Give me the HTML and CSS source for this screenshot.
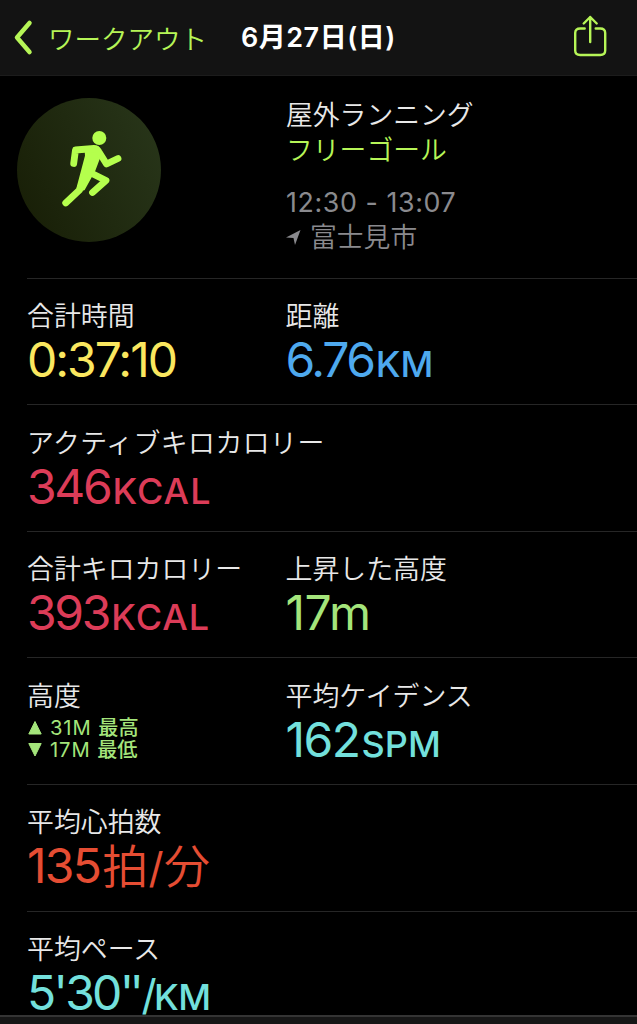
FILE: index.html
```
<!DOCTYPE html>
<html lang="ja">
<head>
    <meta charset="UTF-8">
    <meta name="viewport" content="width=device-width, initial-scale=1.0">
    <title>ワークアウト</title>
    <link rel="stylesheet" href="styles.css">
</head>
<body>
    <div class="container">
        <div class="header">
            <a class="back" href="#">
                <svg width="22" height="36" viewBox="0 0 22 36"><path d="M17.500 3L5 17.500L17.500 32"/></svg>
                <span>ワークアウト</span>
            </a>
            <h1 class="title">6月27日(日)</h1>
            <a class="share" href="#">
                <svg width="36" height="44" viewBox="0 0 36 44"><path d="M9.500 12.500H5Q0 12.500 0 17V34.500Q0 39 5 39H25Q30 39 30 34.500V17Q30 12.500 25 12.500H20.500M15 26V1M8.500 7.500L15 1L21.500 7.500" transform="translate(0.200 0)"/></svg>
            </a>
        </div>
        <div class="content">
            <div class="summary">
                <div class="badge">
                    <svg width="144" height="144" viewBox="0 0 144 144">
                        <circle cx="82.300" cy="40" r="7"/>
                        <path class="torso" d="M69 50L81 50L83 56L77 72L66.500 91L61 90L69.500 58Z"/>
                        <path d="M56.700 65.500L58.500 52L77 50.500Q80 50.500 82 54L89.500 66L101 60.500M72 74L89 82.500L75.500 94.500M67 80L62.500 92L48.700 105"/>
                    </svg>
                </div>
                <div class="info">
                    <div class="kind">屋外ランニング</div>
                    <div class="goal">フリーゴール</div>
                    <div class="time">12:30 - 13:07</div>
                    <div class="place">
                        <svg width="15" height="15" viewBox="0 0 15 15"><path d="M0 7.500L14.500 0L9 15L7.500 8Z"/></svg>
                        <span>富士見市</span>
                    </div>
                </div>
            </div>
            <div class="row">
                <div class="item">
                    <div class="label">合計時間</div>
                    <div class="value yellow duration">0:37:10</div>
                </div>
                <div class="item">
                    <div class="label">距離</div>
                    <div class="value blue">6.76<span class="unit">KM</span></div>
                </div>
            </div>
            <div class="row">
                <div class="item">
                    <div class="label wide">アクティブキロカロリー</div>
                    <div class="value red">346<span class="unit kcal">KCAL</span></div>
                </div>
            </div>
            <div class="row">
                <div class="item">
                    <div class="label">合計キロカロリー</div>
                    <div class="value red">393<span class="unit kcal">KCAL</span></div>
                </div>
                <div class="item">
                    <div class="label">上昇した高度</div>
                    <div class="value green climb">17m</div>
                </div>
            </div>
            <div class="row">
                <div class="item">
                    <div class="label">高度</div>
                    <div class="ranges">
                        <div class="range">
                            <svg width="16" height="16" viewBox="0 0 16 16"><path d="M8 1.500L14.200 14H1.800Z"/></svg>
                            <span>31M <b>最高</b></span>
                        </div>
                        <div class="range">
                            <svg width="16" height="16" viewBox="0 0 16 16"><path d="M8 14L14.200 1.500H1.800Z"/></svg>
                            <span>17M <b>最低</b></span>
                        </div>
                    </div>
                </div>
                <div class="item">
                    <div class="label">平均ケイデンス</div>
                    <div class="value cyan cadence">162<span class="unit">SPM</span></div>
                </div>
            </div>
            <div class="row">
                <div class="item">
                    <div class="label">平均心拍数</div>
                    <div class="value orange rate">135<span class="kanji">拍</span><span class="slash">/</span><span class="kanji">分</span></div>
                </div>
            </div>
            <div class="row">
                <div class="item">
                    <div class="label">平均ペース</div>
                    <div class="value cyan pace">5'30<span class="seconds">''</span><span class="slash">/</span><span class="unit">KM</span></div>
                </div>
            </div>
        </div>
        <div class="tabbar"></div>
    </div>
</body>
</html>
```
FILE: styles.css
```
* {
    padding: 0;
    margin: 0;
    box-sizing: border-box;
}

body {
    background: #000;
    color: #e8e8e8;
    font-family: Inter, "Noto Sans CJK JP", sans-serif;
}

a {
    color: #b6f557;
    text-decoration: none;
}

svg {
    display: block;
    flex: none;
}

.container {
    display: flex;
    flex-direction: column;
    height: 1024px;
    overflow: hidden;
}

.header {
    display: flex;
    align-items: center;
    flex: none;
    height: 76px;
    padding: 0 26px 0 12px;
    background: #131313;
    border-bottom: 1px solid #1c1c1c;
}

.header svg {
    overflow: visible;
    fill: none;
    stroke: #b6f557;
    stroke-linecap: round;
    stroke-linejoin: round;
}

.back {
    display: flex;
    align-items: center;
    gap: 14px;
    width: 229px;
    font-size: 26.5px;
    font-weight: 350;
    white-space: nowrap;
}

.back svg {
    stroke-width: 4.5;
}

.title {
    padding-top: 1px;
    color: #fff;
    font-size: 27px;
    font-weight: 600;
    line-height: 38px;
    letter-spacing: 0.5px;
    white-space: nowrap;
}

.share {
    margin-left: auto;
}

.share svg {
    stroke-width: 2.4;
}

.content {
    flex: 1;
    overflow: hidden;
}

.summary {
    display: grid;
    grid-template-columns: 269px 1fr;
    height: 201.6px;
    padding: 21.5px 0 0 17px;
}

.badge {
    width: 144px;
    height: 144px;
    border-radius: 50%;
    background: linear-gradient(65deg, #171d05, #29371b);
}

.badge svg {
    fill: none;
    stroke: #b5ff4d;
    stroke-width: 6.8;
    stroke-linecap: round;
    stroke-linejoin: round;
}

.badge circle {
    fill: #b5ff4d;
    stroke: none;
}

.badge .torso {
    fill: #b5ff4d;
    stroke-width: 3;
}

.info {
    font-size: 26.8px;
    font-weight: 350;
    line-height: 35px;
}

.goal {
    color: #b6f557;
}

.time,
.place {
    color: #8a8a8e;
}

.time {
    margin-top: 17px;
    font-weight: 400;
    letter-spacing: 0.6px;
}

.place {
    display: flex;
    align-items: center;
    gap: 9px;
}

.place svg {
    fill: #8a8a8e;
}

.row {
    display: grid;
    grid-template-columns: 258.5px 1fr;
    height: 126.6px;
    margin-left: 27px;
    padding-top: 20.5px;
    border-top: 1px solid #262626;
}

.label {
    font-size: 26.9px;
    font-weight: 350;
    line-height: 34px;
    white-space: nowrap;
}

.wide {
    letter-spacing: 0.45px;
}

.value {
    font-size: 48px;
    font-weight: 400;
    line-height: 54px;
    letter-spacing: -2.3px;
    white-space: nowrap;
}

.duration {
    letter-spacing: -2px;
}

.climb {
    letter-spacing: -0.4px;
}

.cadence {
    letter-spacing: -1.5px;
}

.rate {
    letter-spacing: -1.7px;
}

.pace {
    letter-spacing: -2.7px;
}

.seconds {
    letter-spacing: -4.5px;
}

.unit {
    margin-left: 2px;
    font-size: 36px;
    font-weight: 450;
    letter-spacing: 0;
}

.pace .unit {
    margin-left: 0;
    letter-spacing: -0.5px;
}

.kcal {
    letter-spacing: 1px;
}

.kanji {
    margin-left: 2px;
    font-size: 46px;
    font-weight: 350;
    line-height: 1;
}

.slash {
    margin-left: 2px;
    font-size: 42px;
}

.ranges {
    padding-top: 4px;
}

.range {
    display: flex;
    align-items: center;
    gap: 7px;
    color: #a4e57b;
    font-size: 20.2px;
    line-height: 22px;
    letter-spacing: 0.9px;
}

.range b {
    font-weight: 500;
    letter-spacing: 0;
}

.range svg {
    fill: #a4e57b;
    stroke: #a4e57b;
    stroke-linejoin: round;
}

.yellow {
    color: #fae75f;
}

.blue {
    color: #4ea9ee;
}

.red {
    color: #dc3c58;
}

.green {
    color: #a4e57b;
}

.cyan {
    color: #73e0dc;
}

.orange {
    color: #e54d33;
}

.tabbar {
    flex: none;
    height: 9px;
    background: #161616;
    border-top: 2px solid #343434;
}
```
